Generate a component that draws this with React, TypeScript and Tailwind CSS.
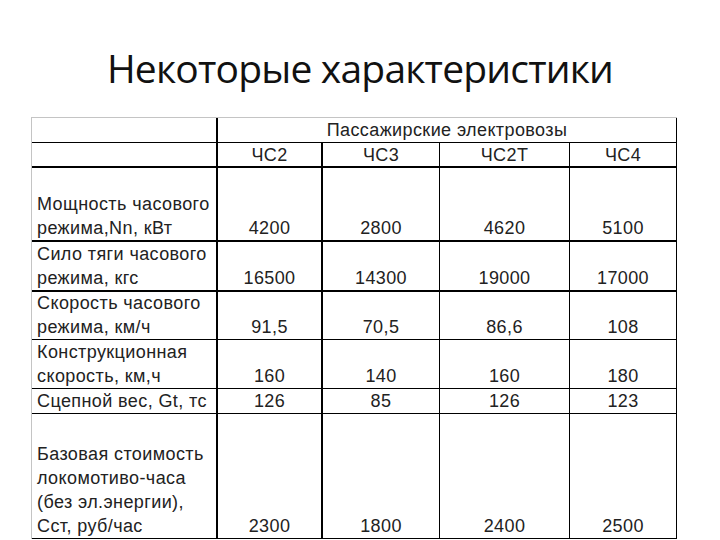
import React from "react";

const cols = ["ЧС2", "ЧС3", "ЧС2Т", "ЧС4"];

const rows = [
  { label: ["Мощность часового", "режима,Nn, кВт"], values: ["4200", "2800", "4620", "5100"], line: "border-b-2" },
  { label: ["Сило тяги часового", "режима, кгс"], values: ["16500", "14300", "19000", "17000"], line: "border-b-2" },
  { label: ["Скорость часового", "режима, км/ч"], values: ["91,5", "70,5", "86,6", "108"], line: "border-b" },
  { label: ["Конструкционная", "скорость, км,ч"], values: ["160", "140", "160", "180"], line: "border-b" },
  { label: ["Сцепной вес, Gt, тс"], values: ["126", "85", "126", "123"], line: "border-b" },
  {
    label: ["Базовая стоимость", "локомотиво-часа", "(без эл.энергии),", "Сст, руб/час"],
    values: ["2300", "1800", "2400", "2500"],
    line: "border-b",
  },
];

// right border of each value column
const colBorder = ["border-r-2", "border-r", "border-r", "border-r"];

const App = () => {
  return (
    <div className="w-[720px] h-[540px] bg-white overflow-hidden">
      <div className="h-[117px] flex items-center justify-center pt-[20px]">
        <h1 className="text-[39px] text-[#111] tracking-[-0.8px] font-['Open_Sans',sans-serif]">
          Некоторые характеристики
        </h1>
      </div>

      <div className="ml-[31px] w-[646px] border-l border-t border-[#c4c4c4] font-['Liberation_Sans',Arial,sans-serif] text-[18px] leading-[24px] tracking-[0.4px] text-[#222]">
        <div className="grid grid-cols-[186px_105px_117px_130px_107px] grid-rows-[25px_25px_74px_50px_48px_49px_25px_125px]">
          {/* header */}
          <div className="border-r-2 border-b border-black" />
          <div className="col-span-4 border-r border-b border-black flex items-center justify-center">
            Пассажирские электровозы
          </div>
          <div className="border-r-2 border-b-2 border-black" />
          {cols.map((c, i) => (
            <div
              key={c}
              className={`${colBorder[i]} border-b-2 border-black flex items-center justify-center`}
            >
              {c}
            </div>
          ))}

          {rows.map((row, r) => (
            <React.Fragment key={r}>
              <div className={`border-r-2 ${row.line} border-black flex flex-col justify-end pl-[5px]`}>
                {row.label.map((l) => (
                  <div key={l} className="whitespace-nowrap">
                    {l}
                  </div>
                ))}
              </div>
              {row.values.map((v, i) => (
                <div
                  key={i}
                  className={`${colBorder[i]} ${row.line} border-black flex items-end justify-center`}
                >
                  {v}
                </div>
              ))}
            </React.Fragment>
          ))}
        </div>
      </div>
    </div>
  );
};

export default App;
